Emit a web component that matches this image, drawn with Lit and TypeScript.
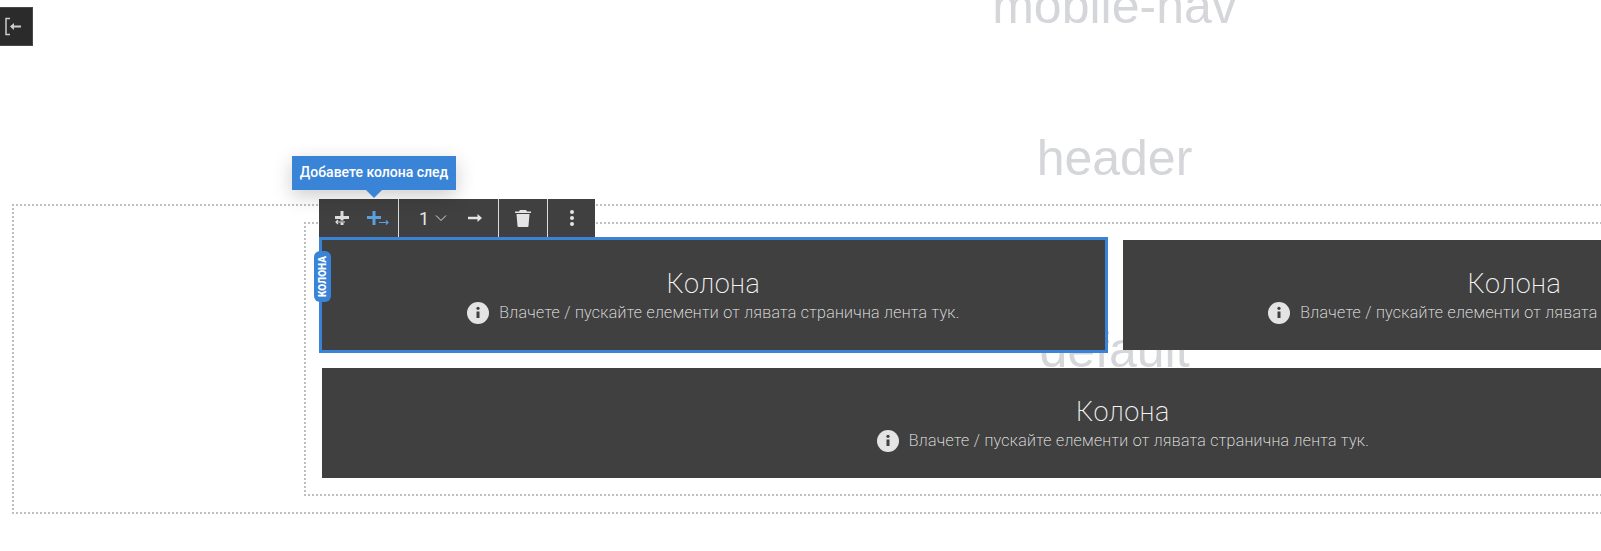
import { LitElement, html, css } from "lit";
import { customElement } from "lit/decorators.js";

const INFO = html`<svg class="info" viewBox="0 0 22 22"><circle cx="11" cy="11" r="11" fill="#e4e4e4"/><circle cx="11" cy="6.300" r="1.600" fill="#404040"/><path d="M9.500 9.500h3V16h-3z" fill="#404040"/></svg>`;

@customElement("app-root")
export class AppRoot extends LitElement {
  static styles = css`
    :host { display: block; position: relative; width: 1601px; height: 551px; overflow: hidden; background: #fff; font-family: Roboto, "Liberation Sans", sans-serif; }
    .labels { position: absolute; left: 0; top: -23px; width: 2229px; display: flex; flex-direction: column; align-items: center; font: 50px/58px "Liberation Sans", Arial, sans-serif; color: #d5d6da; }
    .labels .hdr { margin-top: 94px; }
    .labels .def { margin-top: 134px; }
    .back { position: absolute; left: 0; top: 7px; width: 33px; height: 39px; box-sizing: border-box; background: #2b2b2b; border: 1px solid #484848; border-left: 0; display: flex; align-items: center; justify-content: center; }
    .back svg { width: 33px; height: 39px; flex: none; }
    .page { position: relative; padding: 204px 0 0 12px; }
    .dotted {
      background-image: linear-gradient(90deg, #bfbfbf 2px, transparent 2px), linear-gradient(90deg, #bfbfbf 2px, transparent 2px), linear-gradient(#bfbfbf 2px, transparent 2px), linear-gradient(#bfbfbf 2px, transparent 2px);
      background-size: 4px 2px, 4px 2px, 2px 4px, 2px 4px;
      background-position: 0 0, 0 100%, 0 0, 100% 0;
      background-repeat: repeat-x, repeat-x, repeat-y, repeat-y;
    }
    .outer { width: 1800px; box-sizing: border-box; padding: 18px 0 18px 292px; }
    .inner { padding: 15px 0 15px 15px; }
    .grid { display: flex; flex-wrap: wrap; gap: 12px; width: 1608px; }
    .col { box-sizing: border-box; height: 116px; border: 3px solid transparent; position: relative; background: #404040 padding-box; color: #f6f6f6; display: flex; flex-direction: column; align-items: center; padding-top: 29px; flex: 0 0 789px; }
    .col.full { flex-basis: 1608px; }
    .col.sel { border-color: #3a84d8; }
    .title { font-weight: 200; font-size: 27px; line-height: 30px; letter-spacing: .5px; }
    .hint { display: flex; align-items: center; gap: 10px; font-weight: 200; font-size: 16px; letter-spacing: .3px; line-height: 22px; margin-top: 3px; white-space: nowrap; }
    .info { width: 22px; height: 22px; flex: none; }
    .tag { position: absolute; left: -8px; top: 11px; width: 17px; height: 51px; border-radius: 6px; background: #3a84d8; color: #fff; display: flex; align-items: center; justify-content: center; }
    .tag span { writing-mode: vertical-rl; transform: rotate(180deg); font-weight: 900; font-size: 10px; line-height: 17px; }
    .toolbar { position: absolute; left: -3px; bottom: 100%; margin-bottom: 3px; height: 38px; display: flex; background: #404040; color: #eee; }
    .seg { display: flex; align-items: center; box-sizing: border-box; border-right: 1px solid #ddd; height: 100%; }
    .seg:last-child { border-right: 0; }
    .s1 { width: 80px; padding-left: 14px; gap: 8px; }
    .s2 { width: 100px; padding-left: 20px; }
    .s3 { width: 49px; justify-content: center; }
    .s4 { width: 47px; justify-content: center; }
    .s1 svg { width: 24px; height: 24px; flex: none; }
    .num { font-weight: 400; font-size: 18px; width: 16px; color: #e8e8e8; }
    .chev { width: 12px; height: 8px; }
    .arrow { width: 16px; height: 12px; margin-left: 20px; }
    .trash { width: 16px; height: 17px; }
    .dots { width: 6px; height: 18px; }
    .tip { position: absolute; left: -27px; top: -43px; width: 164px; height: 34px; box-sizing: border-box; background: #3a84d8; color: #fff; font-weight: 500; font-size: 14px; line-height: 32px; text-align: center; white-space: nowrap; box-shadow: 0 6px 20px rgba(0,0,0,.2); }
    .tip::after { content: ""; position: absolute; left: 74px; top: 100%; border: 8px solid transparent; border-top-color: #3a84d8; border-bottom: 0; }
  `;

  private col(extra = "", inside: unknown = "") {
    return html`<div class="col ${extra}">${inside}
      <div class="title">Колона</div>
      <div class="hint">${INFO}<span>Влачете / пускайте елементи от лявата странична лента тук.</span></div>
    </div>`;
  }

  render() {
    const tools = html`
      <div class="toolbar">
        <div class="tip">Добавете колона след</div>
        <div class="seg s1">
          <svg viewBox="0 0 24 24"><path d="M9 5v14M2 11.500h14" stroke="#ddd" stroke-width="3" fill="none"/><path d="M1 15.500h15" stroke="#404040" stroke-width="2"/><path d="M12 16H3M5 14l-2 2 2 2" stroke="#ddd" stroke-width="1.200" fill="none"/></svg>
          <svg viewBox="0 0 24 24"><path d="M9 5v14M2 11.500h14" stroke="#5a9fe0" stroke-width="3" fill="none"/><path d="M14 16.500h9M21 14.500l2 2-2 2" stroke="#5a9fe0" stroke-width="1.200" fill="none"/></svg>
        </div>
        <div class="seg s2">
          <span class="num">1</span>
          <svg class="chev" viewBox="0 0 12 8"><path d="M1 1.500l5 5 5-5" stroke="#ddd" fill="none"/></svg>
          <svg class="arrow" viewBox="0 0 16 12"><path d="M1 6h12" stroke="#e4e4e4" stroke-width="2.500"/><path d="M10.500 2l4.500 4-4.500 4z" fill="#e4e4e4"/></svg>
        </div>
        <div class="seg s3">
          <svg class="trash" viewBox="0 0 16 17"><path d="M5 0h6l1 1.500h4V3H0V1.500h4zM1.500 4h13l-1 12a1 1 0 0 1-1 1h-9a1 1 0 0 1-1-1z" fill="#e4e4e4"/></svg>
        </div>
        <div class="seg s4">
          <svg class="dots" viewBox="0 0 6 18"><circle cx="3" cy="3" r="2" fill="#e4e4e4"/><circle cx="3" cy="9" r="2" fill="#e4e4e4"/><circle cx="3" cy="15" r="2" fill="#e4e4e4"/></svg>
        </div>
      </div>
      <div class="tag"><span>КОЛОНА</span></div>`;
    return html`
      <div class="labels"><div>mobile-nav</div><div class="hdr">header</div><div class="def">default</div></div>
      <div class="back"><svg viewBox="0 0 33 39"><path d="M10 11.500H6v16h4" stroke="#ccc" stroke-width="1.500" fill="none"/><path d="M11 19.500h10" stroke="#ccc" stroke-width="2"/><path d="M14 16l-4 3.500 4 3.500z" fill="#ccc"/></svg></div>
      <div class="page">
        <div class="outer dotted"><div class="inner dotted"><div class="grid">
          ${this.col("sel", tools)}
          ${this.col()}
          ${this.col("full")}
        </div></div></div>
      </div>`;
  }
}
